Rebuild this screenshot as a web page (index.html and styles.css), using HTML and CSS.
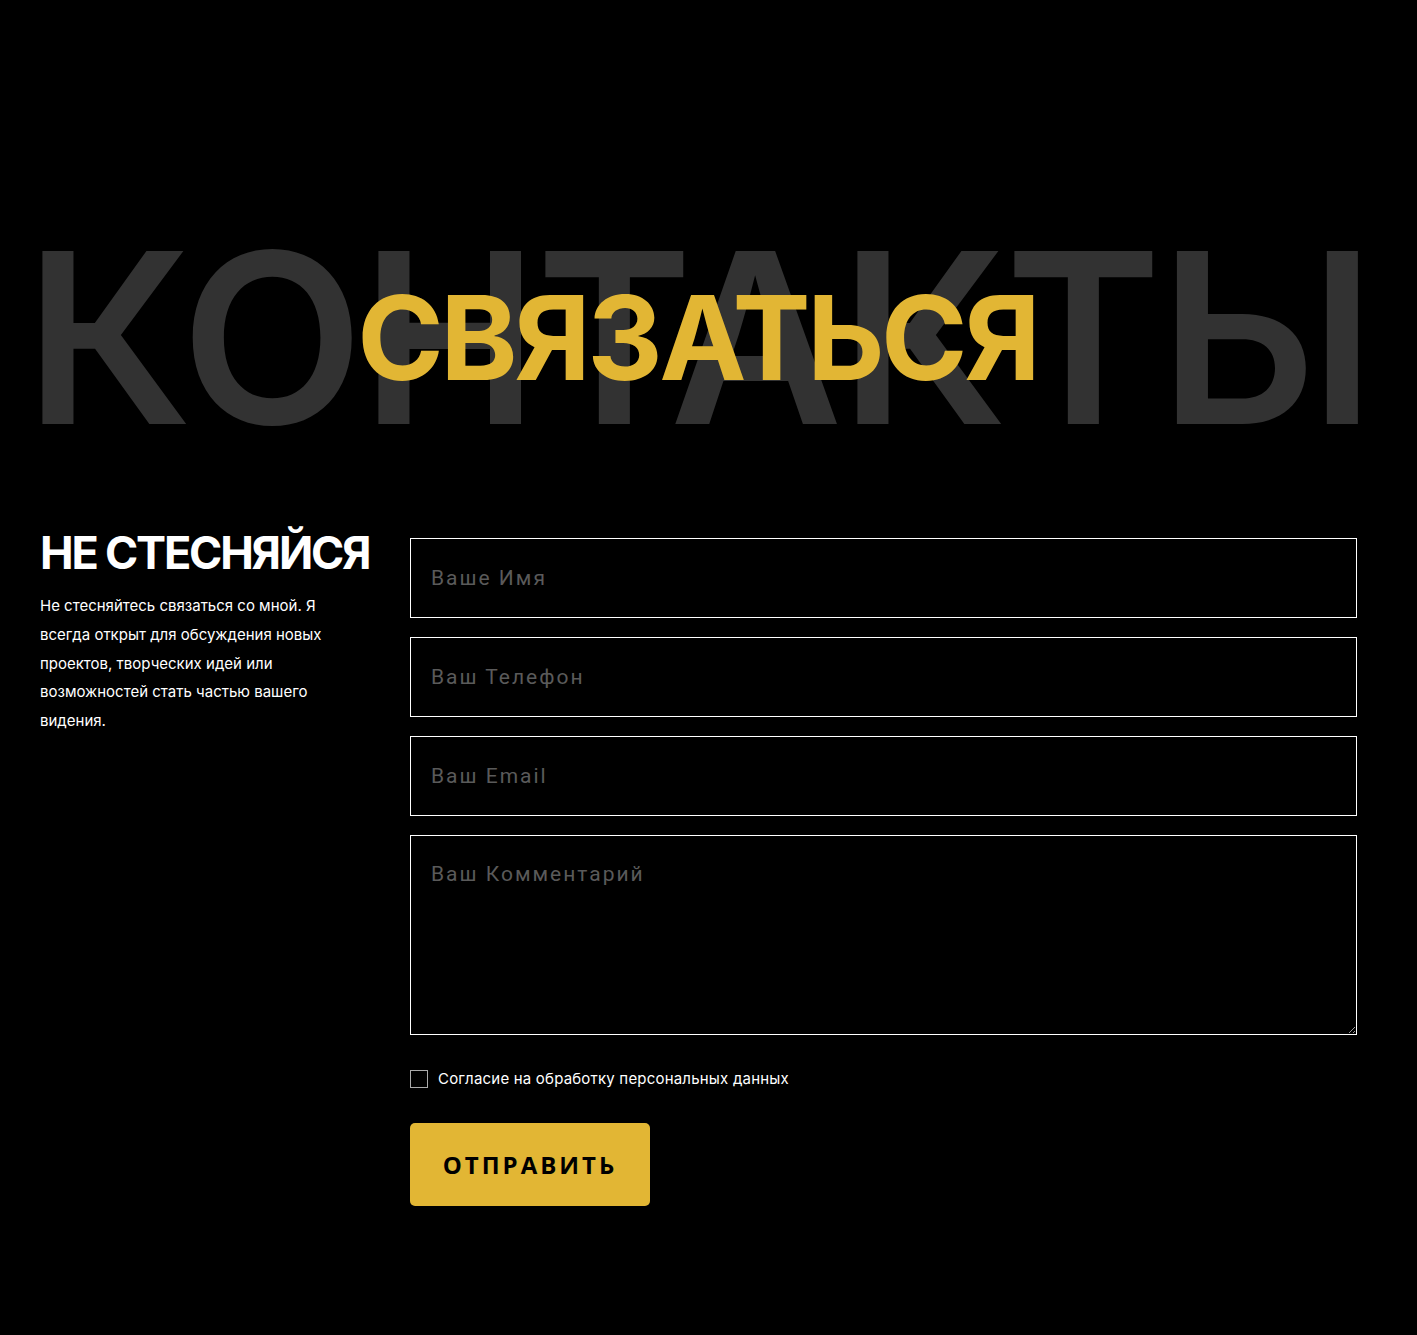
FILE: index.html
```html
<!DOCTYPE html>
<html lang="ru">
<head>
<meta charset="utf-8">
<title>Контакты</title>
<link rel="stylesheet" href="styles.css">
</head>
<body>
<main class="page">
  <section class="hero">
    <div class="hero-bg">КОНТАКТЫ</div>
    <h1 class="hero-title">СВЯЗАТЬСЯ</h1>
  </section>
  <section class="contact">
    <div class="intro">
      <h2 class="intro-title">НЕ СТЕСНЯЙСЯ</h2>
      <p class="intro-text">Не стесняйтесь связаться со мной. Я<br>всегда открыт для обсуждения новых<br>проектов, творческих идей или<br>возможностей стать частью вашего<br>видения.</p>
    </div>
    <form class="form">
      <input class="field" type="text" placeholder="Ваше Имя">
      <input class="field" type="tel" placeholder="Ваш Телефон">
      <input class="field" type="email" placeholder="Ваш Email">
      <textarea class="field field-area" placeholder="Ваш Комментарий"></textarea>
      <label class="consent"><span class="box"></span><span>Согласие на обработку персональных данных</span></label>
      <button class="submit" type="button">ОТПРАВИТЬ</button>
    </form>
  </section>
</main>
</body>
</html>
```
FILE: styles.css
```css
html, body {
  margin: 0;
  padding: 0;
  background: #000;
}
body {
  font-family: Inter, "Noto Sans", sans-serif;
  color: #fff;
}
.page {
  width: 1317px;
  margin-left: 40px;
  padding-top: 218px;
  padding-bottom: 128px;
}
.hero {
  display: grid;
  align-items: center;
  justify-items: center;
}
.hero-bg, .hero-title {
  grid-area: 1 / 1;
}
.hero-bg {
  margin-left: -15px;
  font-size: 238px;
  line-height: 238px;
  font-weight: 600;
  color: #323232;
  letter-spacing: -2.6px;
  white-space: nowrap;
}
.hero-title {
  margin: 0 0 0 -18px;
  font-size: 117px;
  line-height: 117px;
  font-weight: 700;
  color: #e2b634;
  letter-spacing: -3.6px;
}
.contact {
  display: flex;
  margin-top: 82px;
}
.intro {
  width: 330px;
  flex: none;
  margin-right: 40px;
}
.intro-title {
  margin: 0;
  font-size: 45px;
  line-height: 30px;
  font-weight: 700;
  letter-spacing: -2.2px;
  white-space: nowrap;
}
.intro-text {
  margin: 24px 0 0;
  font-size: 15px;
  line-height: 28.75px;
  font-weight: 400;
  white-space: nowrap;
}
.form {
  flex: 1;
  display: flex;
  flex-direction: column;
  align-items: flex-start;
}
.field {
  box-sizing: border-box;
  width: 100%;
  height: 80px;
  margin: 0 0 19px;
  padding: 0 20px;
  background: #000;
  border: 1px solid #fff;
  border-radius: 0;
  color: #fff;
  font-family: Roboto, sans-serif;
  font-size: 21px;
  letter-spacing: 2px;
  outline: none;
}
.field::placeholder {
  color: #5a5a5a;
}
.field-area {
  height: 200px;
  padding: 26px 20px;
  line-height: 24px;
  margin-bottom: 35px;
  resize: vertical;
}
.consent {
  display: flex;
  align-items: center;
  gap: 10px;
  font-size: 15px;
  line-height: 18px;
  letter-spacing: 0.2px;
  color: #fff;
}
.box {
  width: 16px;
  height: 16px;
  border: 1px solid #aaa;
  flex: none;
}
.submit {
  margin-top: 35px;
  width: 240px;
  height: 83px;
  background: #e2b634;
  border: none;
  border-radius: 5px;
  color: #000;
  font-family: "Open Sans", sans-serif;
  font-size: 24px;
  font-weight: 700;
  letter-spacing: 3px;
  cursor: pointer;
}
```
